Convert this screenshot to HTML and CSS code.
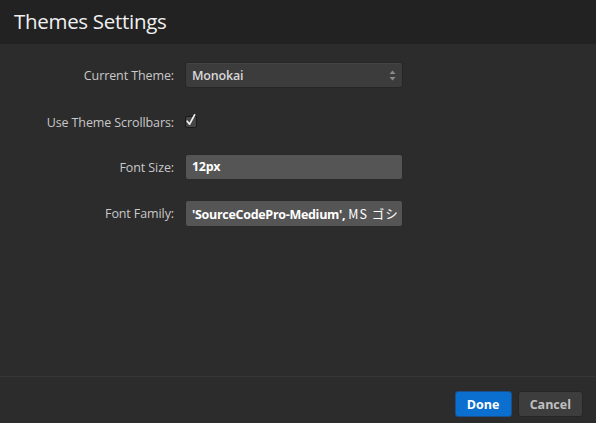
FILE: index.html
```html
<!DOCTYPE html>
<html>
<head>
<meta charset="utf-8">
<link rel="stylesheet" href="styles.css">
</head>
<body>
<div class="dialog">
  <header class="dlg-header"><h1 class="dlg-title">Themes Settings</h1></header>
  <main class="dlg-body">
    <div class="row row-select">
      <label class="lbl">Current Theme:</label>
      <div class="select">
        <span class="select-val">Monokai</span>
        <svg class="arrows" width="7" height="11" viewBox="0 0 7 11"><path d="M3.5 0.5 L6.5 4 L0.5 4 Z" fill="#8a8a8a"/><path d="M3.5 10.5 L6.5 7 L0.5 7 Z" fill="#8a8a8a"/></svg>
      </div>
    </div>
    <div class="row row-check">
      <label class="lbl">Use Theme Scrollbars:</label>
      <span class="check"><svg class="tick" width="12" height="14" viewBox="0 0 12 14"><path d="M2.2 8.2 L4.6 11.2 L9.6 1.8" fill="none" stroke="#f2f2f2" stroke-width="1.7" stroke-linecap="round" stroke-linejoin="round"/></svg></span>
    </div>
    <div class="row row-size">
      <label class="lbl">Font Size:</label>
      <div class="input">12px</div>
    </div>
    <div class="row row-family">
      <label class="lbl">Font Family:</label>
      <div class="input">'SourceCodePro-Medium', <span class="jp">MS ゴシ</span></div>
    </div>
  </main>
  <footer class="dlg-footer">
    <button class="btn btn-primary">Done</button>
    <button class="btn">Cancel</button>
  </footer>
</div>
</body>
</html>
```
FILE: styles.css
```css
html, body { margin: 0; padding: 0; }
body {
  width: 596px; height: 423px; overflow: hidden;
  background: #2c2c2c;
  font-family: "Open Sans", "Noto Sans CJK JP", sans-serif;
}
.dialog { display: flex; flex-direction: column; height: 423px; }
.dlg-header {
  height: 44px; background: #222222; box-sizing: border-box;
  padding: 0 14px; display: flex; align-items: center;
}
.dlg-title {
  margin: 0; font-size: 20.5px; font-weight: 400; color: #f0f0f0;
  letter-spacing: -0.3px; transform: translateY(-1px);
}
.dlg-body { flex: 1; padding-top: 18px; box-sizing: border-box; border-bottom: 1px solid #363636; }
.row { display: flex; align-items: center; }
.lbl {
  width: 185px; flex: none; text-align: right; padding-right: 11px; box-sizing: border-box;
  font-size: 12.5px; color: #c8c8c8; letter-spacing: -0.1px;
}
.row-select { height: 26px; }
.row-check { height: 12px; margin-top: 28px; }
.row-size { height: 26px; margin-top: 26px; }
.row-family { height: 27px; margin-top: 20px; }
.select {
  width: 218px; height: 26px; box-sizing: border-box;
  background: #3c3c3c; border: 1px solid #262626; border-radius: 3px;
  display: flex; align-items: center; justify-content: space-between;
  padding: 0 6px 0 6px; box-shadow: inset 0 1px 0 #454545;
}
.select-val { font-size: 12.5px; font-weight: 600; color: #d8d8d8; letter-spacing: -0.2px; }
.check {
  width: 12px; height: 12px; box-sizing: border-box; position: relative;
  background: #464646; border: 1px solid #1a1a1a; border-radius: 2px;
}
.tick { position: absolute; left: -1px; top: -4px; }
.input {
  width: 218px; height: 100%; box-sizing: border-box;
  background: #555555; border: 1px solid #2a2a2a; border-radius: 3px;
  padding: 0 6px; overflow: hidden; white-space: nowrap;
  font-size: 12.5px; font-weight: 700; color: #ffffff; letter-spacing: -0.3px;
  line-height: 24px;
}
.row-family .input { line-height: 25px; }
.jp { font-weight: 400; font-family: "Noto Sans CJK JP", sans-serif; letter-spacing: 1px; }
.dlg-footer {
  height: 46px; box-sizing: border-box; display: flex; justify-content: flex-end;
  align-items: flex-start; padding: 14px 13px 0 0; gap: 6px;
}
.btn {
  height: 26px; box-sizing: border-box; border-radius: 3px;
  font-family: "Open Sans", sans-serif; font-size: 12.5px; font-weight: 700;
  background: #3d3d3d; border: 1px solid #262626; color: #c0c0c0; padding: 0 11px;
}
.btn-primary { background: #0a6fcf; border-color: #1a4f8a; color: #ffffff; width: 57px; }
```
